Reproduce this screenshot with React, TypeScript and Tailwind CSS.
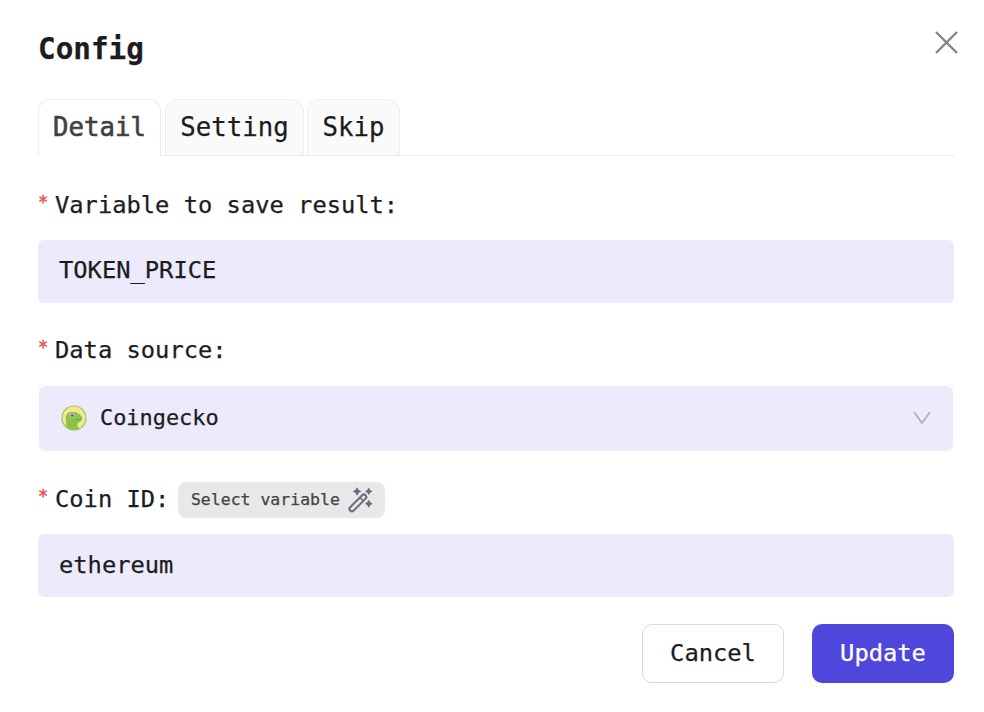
import { useState } from "react";
import type { ReactNode } from "react";

const TABS = [
  { label: "Detail", width: "w-[123px]", gap: "w-1" },
  { label: "Setting", width: "w-[139px]", gap: "w-[3px]" },
  { label: "Skip", width: "w-[93px]", gap: "flex-1" },
];

function GeckoIcon() {
  return (
    <svg viewBox="0 0 26 26" className="w-[26px] h-[26px] shrink-0">
      <circle cx="13" cy="13" r="12" fill="#f6e596" stroke="#a3c65c" strokeWidth="1.200" />
      <path
        d="M5.500 22.300C4.800 19 5.600 16.500 4.900 13.800C4.300 10 6.500 7 10 6.900C13.500 6.500 17 7.800 19.500 10C21.800 12 21.800 14.300 20.200 15.700C19 17 17.500 17.300 16.600 18.500C16 20 16.800 21.800 18.300 23.500C13.500 25.800 8.500 24.800 5.500 22.300Z"
        fill="#8bc34a"
      />
      <path d="M15 14.300C17 15 19.500 14.900 21 13.800" fill="none" stroke="#659f3c" strokeWidth="0.9" />
      <circle cx="11" cy="10.600" r="2.100" fill="#fff" />
      <circle cx="11.100" cy="10.600" r="1.500" fill="#4f5562" />
    </svg>
  );
}

function WandIcon() {
  return (
    <svg viewBox="0 0 26 26" className="w-[26px] h-[26px] shrink-0" fill="none" stroke="#6d6b7b">
      <rect
        x="-2.400"
        y="-10.800"
        width="4.800"
        height="21.600"
        rx="2.300"
        transform="translate(10.900 15.900) rotate(45)"
        strokeWidth="2"
      />
      <path d="M13 10.500L16.300 13.800" strokeWidth="1.500" />
      <g fill="#6d6b7b" strokeWidth="1.400" strokeLinejoin="round">
        <path d="M10 1.200L11 3.400L13.200 4.400L11 5.400L10 7.600L9 5.400L6.800 4.400L9 3.400Z" />
        <path d="M21.700 1.800L22.500 3.600L24.300 4.400L22.500 5.200L21.700 7L20.900 5.200L19.100 4.400L20.900 3.600Z" />
        <path d="M21.700 13.700L22.600 15.700L24.500 16.700L22.600 17.700L21.700 19.700L20.800 17.700L18.900 16.700L20.800 15.700Z" />
      </g>
    </svg>
  );
}

function Label({ children }: { children: ReactNode }) {
  return (
    <span className="flex items-center whitespace-pre">
      <span className="w-[17px] pb-[7px] text-[17px] text-[#f0524f] [-webkit-text-stroke:0.5px]">*</span>
      {children}
    </span>
  );
}

export default function App() {
  const [tab, setTab] = useState("Detail");
  const [variable, setVariable] = useState("TOKEN_PRICE");
  const [coinId, setCoinId] = useState("ethereum");

  return (
    <div className="w-[984px] h-[712px] bg-white pl-[38px] pr-[30px] overflow-hidden font-['DejaVu_Sans_Mono',monospace] text-[23.750px] leading-8 text-[#1c1c1e] [-webkit-text-stroke:0.25px]">
      {/* Header */}
      <div className="flex justify-between h-[99px]">
        <h2 className="mt-[31px] text-[29.300px] leading-9 font-bold">Config</h2>
        <button aria-label="Close" className="mt-[30px] mr-[-4px] w-6 h-6">
          <svg viewBox="0 0 24 24" fill="none" stroke="#858585" strokeWidth="2.400">
            <path d="M2 2L23 23M23 2L2 23" />
          </svg>
        </button>
      </div>

      {/* Tabs */}
      <div className="flex h-[57px] text-[25.700px]">
        {TABS.map(({ label, width, gap }) => (
          <div key={label} className={gap === "flex-1" ? "flex flex-1" : "flex"}>
            <button
              onClick={() => setTab(label)}
              className={`${width} shrink-0 border border-[#ededed] rounded-t-xl pb-0.5 ${
                tab === label ? "border-b-white bg-white text-[#3f4045] [-webkit-text-stroke:0.6px]" : "bg-[#fafafa]"
              }`}
            >
              {label}
            </button>
            <div className={`${gap} border-b border-[#ededed]`} />
          </div>
        ))}
      </div>

      {/* Form */}
      <div className="flex items-center h-[84px] pt-[14px]">
        <Label>Variable to save result:</Label>
      </div>
      <input
        value={variable}
        onChange={(e) => setVariable(e.target.value)}
        className="block w-full h-[63px] rounded-md bg-[#edeafb] px-[21px] pb-[3px] outline-none"
      />
      <div className="flex items-center h-[83px] pt-[11px]">
        <Label>Data source:</Label>
      </div>
      <button className="flex items-center w-[914px] h-[65px] ml-px rounded-md bg-[#edeafb] pl-[21.500px] pr-[22px] pb-0.5 text-[21.900px]">
        <GeckoIcon />
        <span className="ml-[13.500px]">Coingecko</span>
        <svg viewBox="0 0 18 14" className="ml-auto w-[18px] h-[14px]" fill="none" stroke="#b3b0bd" strokeWidth="1.900">
          <path d="M1 1L9 12L17 1" />
        </svg>
      </button>
      <div className="flex h-[83px] pt-[31px]">
        <div className="flex items-center h-[34px]">
          <Label>Coin ID:</Label>
        </div>
        <button className="flex items-center ml-[8.500px] w-[207px] h-9 rounded-lg bg-[#e8e8e8] pl-[13px] text-[16.500px] text-[#444]">
          Select variable
          <span className="ml-[7px]">
            <WandIcon />
          </span>
        </button>
      </div>
      <input
        value={coinId}
        onChange={(e) => setCoinId(e.target.value)}
        className="block w-full h-[63px] rounded-md bg-[#edeafb] px-[21px] pb-0.5 outline-none"
      />

      {/* Footer */}
      <div className="flex justify-end gap-7 mt-[27px]">
        <button className="w-[142px] h-[59px] rounded-[10px] border border-[#d9d9d9] bg-white pb-0.5">Cancel</button>
        <button className="w-[142px] h-[59px] rounded-[10px] bg-[#4f46dc] text-white pb-0.5">Update</button>
      </div>
    </div>
  );
}
